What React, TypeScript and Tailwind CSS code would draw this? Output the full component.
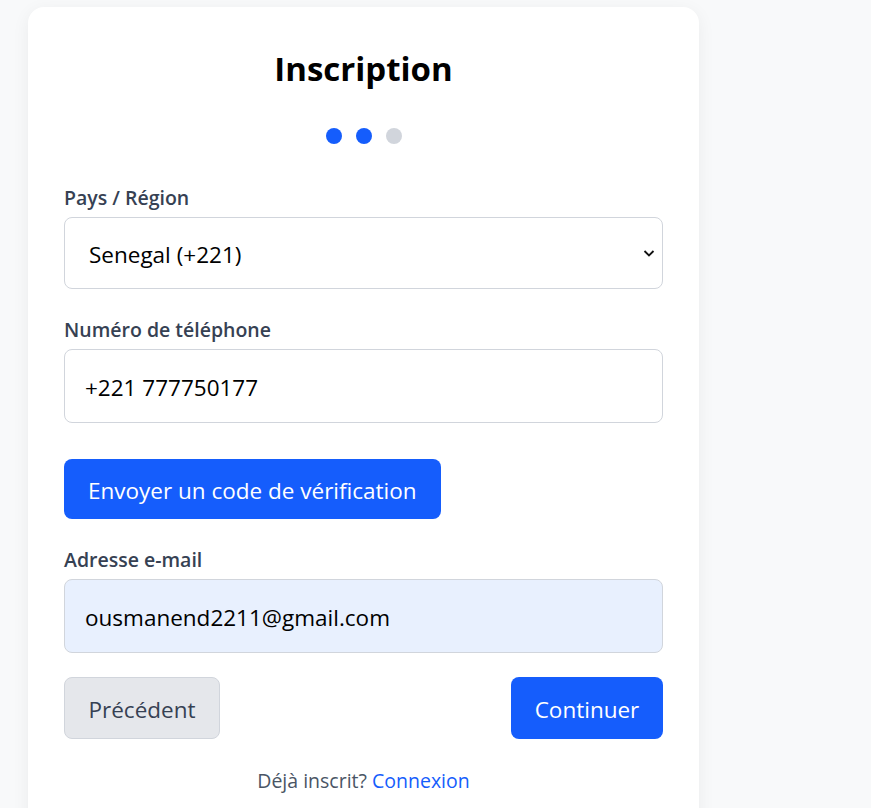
import { useState } from 'react';

function Field({ label, children }: { label: string; children: React.ReactNode }) {
  return (
    <div className="flex flex-col gap-[5px]">
      <label className="text-[19.5px] leading-7 font-semibold text-gray-700">{label}</label>
      {children}
    </div>
  );
}

export default function App() {
  const [country, setCountry] = useState('SN');
  const [phone, setPhone] = useState('+221 777750177');
  const [email, setEmail] = useState('ousmanend2211@gmail.com');
  const step = 2;

  return (
    <div className="min-h-screen bg-[#f8f9fa] pl-7 pt-[7px]" style={{ fontFamily: '"Open Sans", "Noto Sans", sans-serif' }}>
      <div className="w-[671px] bg-white rounded-2xl shadow-[0_4px_18px_rgba(0,0,0,0.06)] px-9 pt-[42px] pb-10">
        <h1 className="text-[33px] leading-10 font-bold text-black text-center">Inscription</h1>

        <div className="flex justify-center gap-[14px] mt-[39px]">
          {[1, 2, 3].map((i) => (
            <span key={i} className={i <= step ? 'w-4 h-4 rounded-full bg-blue-600' : 'w-4 h-4 rounded-full bg-gray-300'} />
          ))}
        </div>

        <div className="mt-10 flex flex-col">
          <Field label="Pays / Région">
            <div className="relative">
              <select
                value={country}
                onChange={(e) => setCountry(e.target.value)}
                className="w-full h-[72px] appearance-none rounded-lg border border-gray-300 bg-white pl-6 pr-10 pt-[3px] text-[22.5px] text-black outline-none"
              >
                <option value="SN">Senegal (+221)</option>
                <option value="FR">France (+33)</option>
                <option value="CI">Côte d'Ivoire (+225)</option>
              </select>
              <svg className="absolute right-[8px] top-[30px] w-[12px] h-[12px] pointer-events-none" viewBox="0 0 12 12" fill="none">
                <path d="M1.5 4l4.5 4.5L10.5 4" stroke="#111" strokeWidth="1.8" />
              </svg>
            </div>
          </Field>

          <div className="mt-[27px]">
            <Field label="Numéro de téléphone">
              <input
                value={phone}
                onChange={(e) => setPhone(e.target.value)}
                className="w-full h-[74px] rounded-lg border border-gray-300 bg-white px-5 pt-[3px] text-[22.5px] text-black outline-none"
              />
            </Field>
          </div>

          <div className="mt-[36px]">
            <button className="h-[60px] px-6 pt-[3px] rounded-lg bg-blue-600 text-white text-[22.5px]">Envoyer un code de vérification</button>
          </div>

          <div className="mt-[27px]">
            <Field label="Adresse e-mail">
              <input
                value={email}
                onChange={(e) => setEmail(e.target.value)}
                className="w-full h-[74px] rounded-lg border border-gray-300 bg-[#e8f0fe] px-5 pt-[3px] text-[22.5px] text-black outline-none"
              />
            </Field>
          </div>

          <div className="mt-6 flex justify-between">
            <button className="h-[62px] w-[156px] pt-[3px] rounded-lg border border-gray-300 bg-gray-200 text-gray-700 text-[22.5px]">Précédent</button>
            <button className="h-[62px] w-[152px] pt-[3px] rounded-lg bg-blue-600 text-white text-[22.5px]">Continuer</button>
          </div>

          <p className="mt-[28px] text-center text-[19.5px] leading-7 text-gray-600">
            Déjà inscrit? <a className="text-blue-600" href="#">Connexion</a>
          </p>
        </div>
      </div>
    </div>
  );
}
